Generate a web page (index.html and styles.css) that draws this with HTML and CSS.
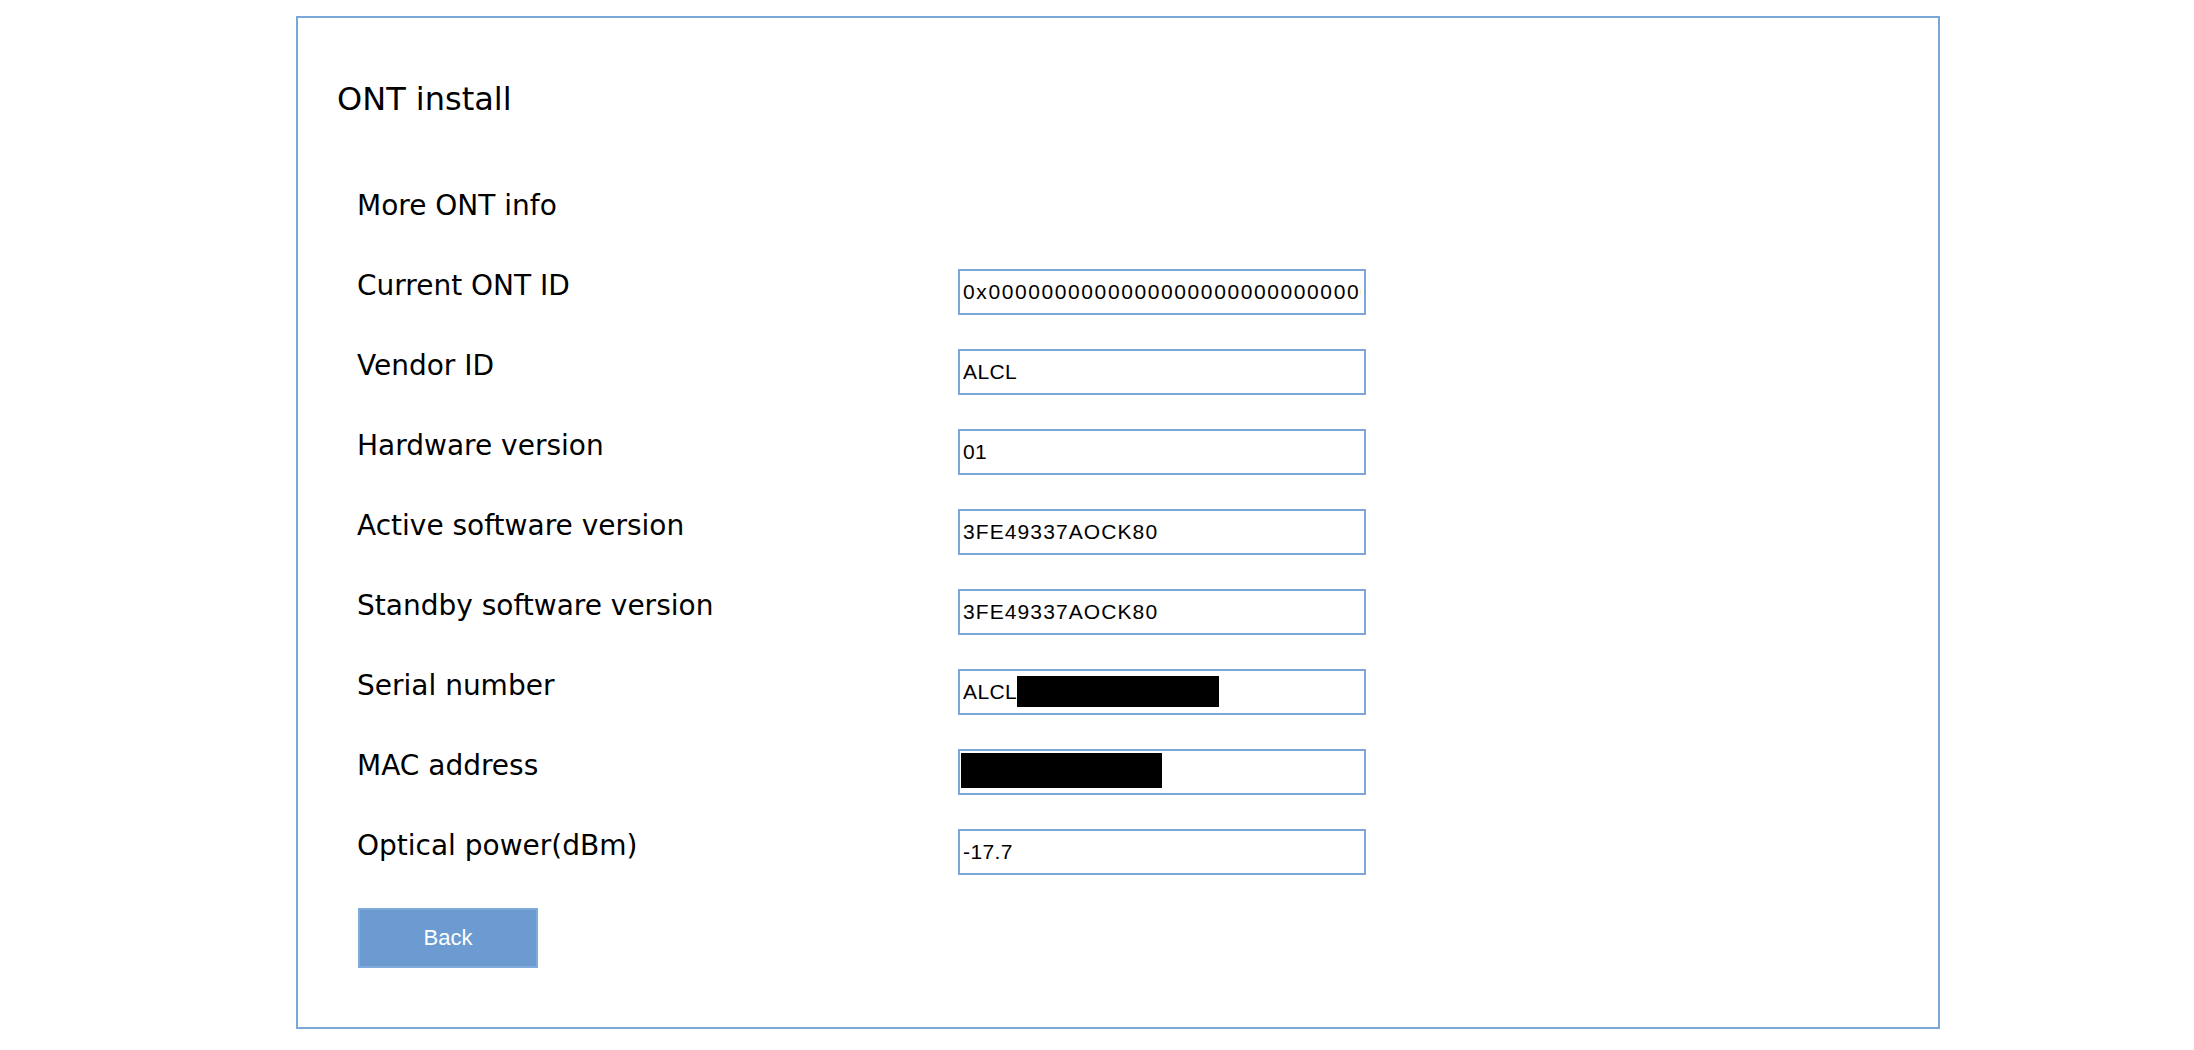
FILE: index.html
```html
<!DOCTYPE html>
<html lang="en">
<head>
<meta charset="utf-8">
<title>ONT install</title>
<link rel="stylesheet" href="styles.css">
</head>
<body>
<div class="panel">
  <h1 class="title">ONT install</h1>
  <div class="form">
    <div class="row"><div class="label">More ONT info</div></div>
    <div class="row">
      <div class="label">Current ONT ID</div>
      <div class="field"><input class="input input-id" type="text" readonly value="0x00000000000000000000000000000000"></div>
    </div>
    <div class="row">
      <div class="label">Vendor ID</div>
      <div class="field"><input class="input" type="text" readonly value="ALCL"></div>
    </div>
    <div class="row">
      <div class="label">Hardware version</div>
      <div class="field"><input class="input" type="text" readonly value="01"></div>
    </div>
    <div class="row">
      <div class="label">Active software version</div>
      <div class="field"><input class="input input-ver" type="text" readonly value="3FE49337AOCK80"></div>
    </div>
    <div class="row">
      <div class="label">Standby software version</div>
      <div class="field"><input class="input input-ver" type="text" readonly value="3FE49337AOCK80"></div>
    </div>
    <div class="row">
      <div class="label">Serial number</div>
      <div class="field"><input class="input" type="text" readonly value="ALCL"><div class="redact redact-serial"></div></div>
    </div>
    <div class="row">
      <div class="label">MAC address</div>
      <div class="field"><input class="input" type="text" readonly value=""><div class="redact redact-mac"></div></div>
    </div>
    <div class="row">
      <div class="label">Optical power(dBm)</div>
      <div class="field"><input class="input" type="text" readonly value="-17.7"></div>
    </div>
    <div class="actions">
      <button class="btn" type="button">Back</button>
    </div>
  </div>
</div>
</body>
</html>
```
FILE: styles.css
```css
* { box-sizing: border-box; }

html, body {
  margin: 0;
  padding: 0;
  background: #ffffff;
}

body {
  font-family: "DejaVu Sans", Verdana, sans-serif;
  color: #000000;
  padding: 16px 0 0 296px;
}

.panel {
  width: 1644px;
  height: 1013px;
  border: 2px solid #7ba7d8;
  padding: 64px 33px 0 39px;
}

.title {
  margin: 0;
  font-size: 32px;
  font-weight: normal;
  line-height: 34px;
  color: #000;
}

.form {
  margin-top: 73px;
  padding-left: 20px;
  display: flex;
  flex-direction: column;
  gap: 34px;
}

.row {
  display: flex;
  align-items: flex-start;
  min-height: 46px;
}

.label {
  width: 601px;
  font-size: 28px;
  line-height: 34px;
  color: #000;
}

.field {
  position: relative;
  width: 408px;
  height: 46px;
}

.input {
  display: block;
  width: 408px;
  height: 46px;
  margin: 0;
  border: 2px solid #7ba7d8;
  border-radius: 0;
  padding: 0 3px;
  background: #fff;
  font-family: "Liberation Sans", Arial, Helvetica, sans-serif;
  font-size: 21px;
  letter-spacing: 0.4px;
  color: #000;
  outline: none;
}

.input-id {
  letter-spacing: 1.6px;
}

.input-ver {
  letter-spacing: 1.1px;
}

.redact {
  position: absolute;
  background: #000;
}

.redact-serial {
  left: 59px;
  top: 7px;
  width: 202px;
  height: 31px;
}

.redact-mac {
  left: 3px;
  top: 4px;
  width: 201px;
  height: 35px;
}

.actions {
  display: flex;
  margin-top: -1px;
  margin-left: 1px;
}

.btn {
  width: 180px;
  height: 60px;
  margin: 0;
  padding: 0;
  background: #6b9bd1;
  border: 2px solid #80aadb;
  border-radius: 0;
  color: #ffffff;
  font-family: "Liberation Sans", Arial, Helvetica, sans-serif;
  font-size: 22px;
  cursor: pointer;
}
```
